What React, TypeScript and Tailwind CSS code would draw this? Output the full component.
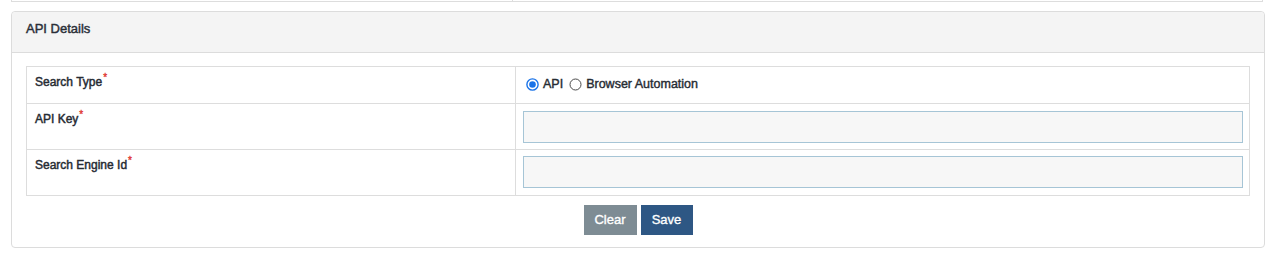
import type { ReactNode } from "react"

const Req = () => (
  <span className="ml-px align-super text-[10px] leading-none text-[#e0322c] [-webkit-text-stroke:0.3px_#e0322c]">*</span>
)

const Label = ({ children }: { children: ReactNode }) => (
  <div className="w-[489px] shrink-0 border-r border-[#dddddd] pl-[8px] pt-[6px] text-[12px] leading-[16px] text-[#262b33] [-webkit-text-stroke:0.45px_#262b33]">
    {children}
    <Req />
  </div>
)

const Radio = ({ checked }: { checked?: boolean }) => (
  <svg width="13" height="13" viewBox="0 0 13 13" className="shrink-0">
    {checked ? (
      <>
        <circle cx="6.5" cy="6.5" r="5.6" fill="#ffffff" stroke="#1a73e8" strokeWidth="1.4" />
        <circle cx="6.5" cy="6.5" r="3.3" fill="#1a73e8" />
      </>
    ) : (
      <circle cx="6.5" cy="6.5" r="5.5" fill="#ffffff" stroke="#4a4a4a" strokeWidth="1" />
    )}
  </svg>
)

const TextBox = () => (
  <input
    type="text"
    className="h-[32px] w-full border border-[#a6c5d6] bg-[#f7f7f7] px-2 text-[12px] outline-none"
  />
)

export default function App() {
  return (
    <div className="min-h-[258px] bg-white pl-[11px] pr-[10px] font-['Liberation_Sans',Arial,sans-serif]">
      <div className="mr-[2px] flex h-[2px] border-x border-b border-[#dddddd]">
        <div className="w-[501px] border-r border-[#dddddd]" />
      </div>

      <div className="mt-[9px] rounded-[4px] border border-[#dcdcdc]">
        <div className="h-[41px] rounded-t-[4px] border-b border-[#dcdcdc] bg-[#f4f4f4] px-[14px] pt-[9px] text-[13px] leading-[16px] text-[#2b2f38] [-webkit-text-stroke:0.45px_#2b2f38]">
          API Details
        </div>

        <div className="px-[14px] pb-[12px] pt-[13px]">
          <div className="border border-[#dddddd]">
            <div className="flex h-[37px] border-b border-[#dddddd]">
              <Label>Search Type</Label>
              <div className="flex flex-1 items-center pb-px pl-[10px] text-[12.5px] text-[#262b33] [-webkit-text-stroke:0.4px_#262b33]">
                <Radio checked />
                <span className="ml-[4px]">API</span>
                <span className="ml-[6px]">
                  <Radio />
                </span>
                <span className="ml-[4px]">Browser Automation</span>
              </div>
            </div>

            <div className="flex h-[46px] border-b border-[#dddddd]">
              <Label>API Key</Label>
              <div className="flex-1 pl-[7px] pr-[6px] pt-[7px]">
                <TextBox />
              </div>
            </div>

            <div className="flex h-[45px]">
              <Label>Search Engine Id</Label>
              <div className="flex-1 pl-[7px] pr-[6px] pt-[6px]">
                <TextBox />
              </div>
            </div>
          </div>

          <div className="mt-[9px] flex justify-center gap-[4px]">
            <button className="h-[30px] w-[53px] bg-[#7e8c94] text-[13px] text-white [-webkit-text-stroke:0.35px_#ffffff]">
              Clear
            </button>
            <button className="h-[30px] w-[52px] bg-[#2e5784] text-[13px] text-white [-webkit-text-stroke:0.35px_#ffffff]">
              Save
            </button>
          </div>
        </div>
      </div>
    </div>
  )
}
